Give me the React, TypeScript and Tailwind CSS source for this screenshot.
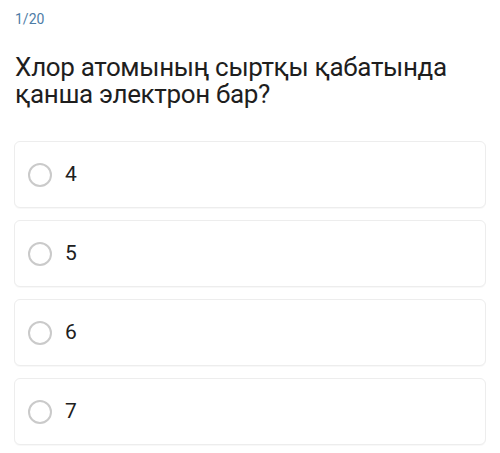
import React from 'react';

const options = ['4', '5', '6', '7'];

export default function App() {
  return (
    <div className="w-[500px] h-[453px] bg-white px-[15px] pt-[9px]" style={{ fontFamily: 'Roboto, "Noto Sans", sans-serif' }}>
      <div className="text-[14px] leading-[20px] text-[#4d7ca6]">1/20</div>
      <h1 className="mt-[25px] text-[26px] leading-[27px] tracking-[-0.35px] font-normal text-[#1e1e1e]">
        Хлор атомының сыртқы қабатында қанша электрон бар?
      </h1>
      <div className="mt-[33px] flex flex-col gap-[12px] -mx-px">
        {options.map(opt => (
          <div
            key={opt}
            className="h-[67px] flex items-center gap-[13px] pl-[13px] rounded-[6px] border border-[#ededed] bg-white shadow-[0_1px_1px_rgba(0,0,0,0.03)]"
          >
            <span className="w-[24px] h-[24px] rounded-full border-2 border-[#cacaca]" />
            <span className="text-[21px] leading-none text-[#202020]">{opt}</span>
          </div>
        ))}
      </div>
    </div>
  );
}
